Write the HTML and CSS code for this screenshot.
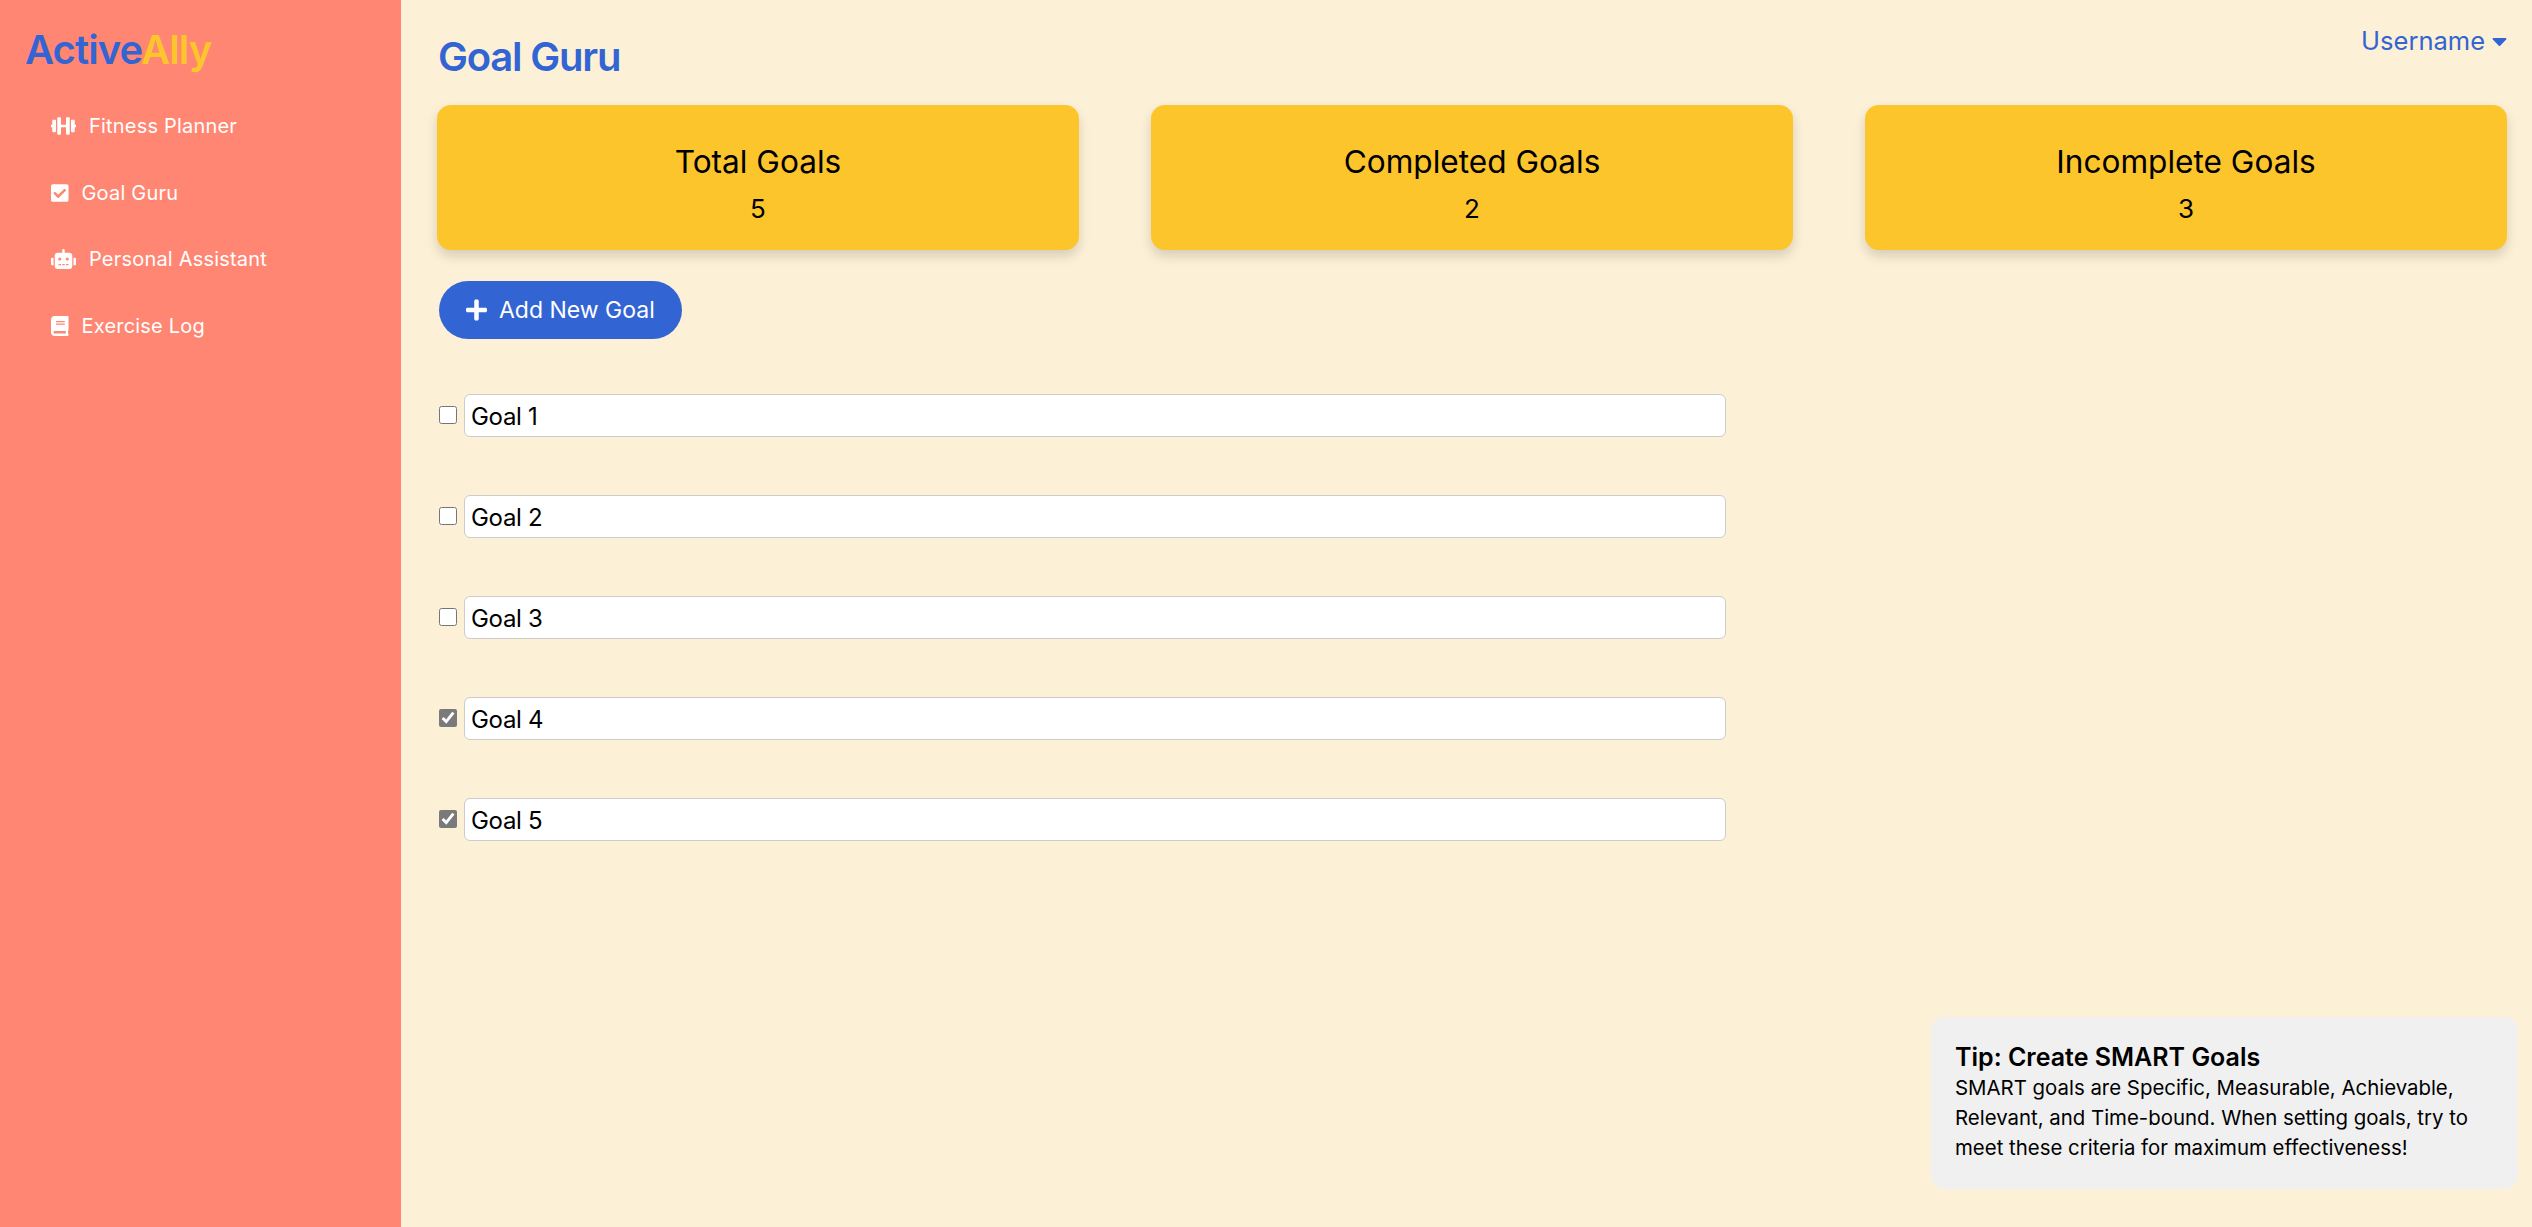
FILE: index.html
```html
<!DOCTYPE html>
<html lang="en">
<head>
    <meta charset="UTF-8">
    <meta name="viewport" content="width=device-width, initial-scale=1.0">
    <title>Goal Guru - ActiveAlly</title>
    <link rel="stylesheet" href="styles.css">
</head>
<body>
    <aside class="sidebar">
        <div class="logo">Active<span class="logo-ally">Ally</span></div>
        <ul class="side-nav">
            <li><a href="#"><svg class="nav-icon wide" viewBox="0 0 640 512"><path d="M104 96H56c-13.3 0-24 10.7-24 24v104H8c-4.4 0-8 3.6-8 8v48c0 4.4 3.6 8 8 8h24v104c0 13.3 10.7 24 24 24h48c13.3 0 24-10.7 24-24V120c0-13.3-10.7-24-24-24zm528 128h-24V120c0-13.3-10.7-24-24-24h-48c-13.3 0-24 10.7-24 24v272c0 13.3 10.7 24 24 24h48c13.3 0 24-10.7 24-24V288h24c4.4 0 8-3.6 8-8v-48c0-4.4-3.6-8-8-8zM456 32h-48c-13.3 0-24 10.7-24 24v168H256V56c0-13.3-10.7-24-24-24h-48c-13.3 0-24 10.7-24 24v400c0 13.3 10.7 24 24 24h48c13.3 0 24-10.7 24-24V288h128v168c0 13.3 10.7 24 24 24h48c13.3 0 24-10.7 24-24V56c0-13.3-10.7-24-24-24z"/></svg>Fitness Planner</a></li>
            <li><a href="#"><svg class="nav-icon" viewBox="0 0 448 512"><path d="M400 480H48c-26.51 0-48-21.49-48-48V80c0-26.51 21.49-48 48-48h352c26.51 0 48 21.49 48 48v352c0 26.51-21.49 48-48 48zm-204.686-98.059l184-184c6.248-6.248 6.248-16.379 0-22.627l-22.627-22.627c-6.248-6.248-16.379-6.249-22.628 0L184 302.745l-70.059-70.059c-6.248-6.248-16.379-6.248-22.628 0l-22.627 22.627c-6.248 6.248-6.248 16.379 0 22.627l104 104c6.249 6.25 16.379 6.25 22.628.001z"/></svg>Goal Guru</a></li>
            <li><a href="#"><svg class="nav-icon wide" viewBox="0 0 640 512"><path d="M32,224H64V416H32A31.96166,31.96166,0,0,1,0,384V256A31.96166,31.96166,0,0,1,32,224Zm512-48V448a64.06328,64.06328,0,0,1-64,64H160a64.06328,64.06328,0,0,1-64-64V176a79.974,79.974,0,0,1,80-80H288V32a32,32,0,0,1,64,0V96H464A79.974,79.974,0,0,1,544,176ZM264,256a40,40,0,1,0-40,40A39.997,39.997,0,0,0,264,256Zm-8,128H192v32h64Zm96,0H288v32h64ZM456,256a40,40,0,1,0-40,40A39.997,39.997,0,0,0,456,256Zm-8,128H384v32h64ZM640,256V384a31.96166,31.96166,0,0,1-32,32H576V224h32A31.96166,31.96166,0,0,1,640,256Z"/></svg>Personal Assistant</a></li>
            <li><a href="#"><svg class="nav-icon" viewBox="0 0 448 512"><path d="M448 360V24c0-13.3-10.7-24-24-24H96C43 0 0 43 0 96v320c0 53 43 96 96 96h328c13.3 0 24-10.7 24-24v-16c0-7.5-3.5-14.3-8.9-18.7-4.2-15.4-4.2-59.3 0-74.7 5.4-4.3 8.9-11.1 8.9-18.6zM128 134c0-3.3 2.7-6 6-6h212c3.3 0 6 2.7 6 6v20c0 3.3-2.7 6-6 6H134c-3.3 0-6-2.7-6-6v-20zm0 64c0-3.3 2.7-6 6-6h212c3.3 0 6 2.7 6 6v20c0 3.3-2.7 6-6 6H134c-3.3 0-6-2.7-6-6v-20zm253.4 250H96c-17.7 0-32-14.3-32-32 0-17.6 14.4-32 32-32h285.4c-1.9 17.1-1.9 46.9 0 64z"/></svg>Exercise Log</a></li>
        </ul>
    </aside>

    <main class="main">
        <header class="topbar">
            <h1>Goal Guru</h1>
            <a class="user-menu" href="#">Username<svg class="caret" viewBox="0 0 320 512"><path d="M31.3 192h257.3c17.8 0 26.7 21.5 14.1 34.1L174.1 354.8c-7.8 7.8-20.5 7.8-28.3 0L17.2 226.1C4.6 213.5 13.5 192 31.3 192z"/></svg></a>
        </header>

        <section class="stats">
            <div class="stat-card">
                <h3>Total Goals</h3>
                <p>5</p>
            </div>
            <div class="stat-card">
                <h3>Completed Goals</h3>
                <p>2</p>
            </div>
            <div class="stat-card">
                <h3>Incomplete Goals</h3>
                <p>3</p>
            </div>
        </section>

        <button class="add-btn"><svg class="plus" viewBox="0 0 448 512"><path d="M416 208H272V64c0-17.67-14.33-32-32-32h-32c-17.67 0-32 14.33-32 32v144H32c-17.67 0-32 14.33-32 32v32c0 17.67 14.33 32 32 32h144v144c0 17.67 14.33 32 32 32h32c17.67 0 32-14.33 32-32V304h144c17.67 0 32-14.33 32-32v-32c0-17.67-14.33-32-32-32z"/></svg>Add New Goal</button>

        <div class="goal-list">
            <div class="goal"><input type="checkbox"><input class="goal-text" type="text" value="Goal 1"></div>
            <div class="goal"><input type="checkbox"><input class="goal-text" type="text" value="Goal 2"></div>
            <div class="goal"><input type="checkbox"><input class="goal-text" type="text" value="Goal 3"></div>
            <div class="goal"><input type="checkbox" checked><input class="goal-text" type="text" value="Goal 4"></div>
            <div class="goal"><input type="checkbox" checked><input class="goal-text" type="text" value="Goal 5"></div>
        </div>

        <div class="tip">
            <h4>Tip: Create SMART Goals</h4>
            <p>SMART goals are Specific, Measurable, Achievable, Relevant, and Time-bound. When setting goals, try to meet these criteria for maximum effectiveness!</p>
        </div>
    </main>
</body>
</html>
```

FILE: styles.css
```css
/* ActiveAlly - Goal Guru */
* {
    box-sizing: border-box;
}
html, body {
    height: 100%;
}
body {
    margin: 0;
    display: flex;
    overflow: hidden;
    font-family: Inter, "Noto Sans", sans-serif;
    background-color: #fcf0d6;
    color: #000;
}
.sidebar {
    width: 401px;
    flex-shrink: 0;
    background-color: #ff8673;
    padding: 25px 25px;
}
.logo {
    font-size: 40px;
    line-height: 50px;
    font-weight: 600;
    letter-spacing: -0.9px;
    color: #3364d4;
}
.logo-ally {
    color: #fdc52c;
}
.side-nav {
    list-style-type: none;
    margin: 18px 0 0;
    padding: 0 0 0 26px;
}
.side-nav li {
    height: 66.5px;
    display: flex;
    align-items: center;
}
.side-nav a {
    display: flex;
    align-items: center;
    color: #fff;
    text-decoration: none;
    font-size: 20px;
    letter-spacing: 0.2px;
}
.nav-icon {
    width: 17.5px;
    height: 20px;
    margin-right: 13px;
    fill: #fff;
}
.nav-icon.wide {
    width: 25px;
}
.main {
    flex: 1;
    position: relative;
    padding: 0 25px 0 36px;
}
.topbar {
    display: flex;
    justify-content: space-between;
    align-items: flex-start;
    height: 105px;
    padding-left: 1px;
}
.topbar h1 {
    margin: 33px 0 0;
    font-size: 40px;
    line-height: 48px;
    font-weight: 600;
    letter-spacing: -1.2px;
    color: #3364d4;
}
.user-menu {
    display: flex;
    align-items: center;
    margin-top: 24px;
    font-size: 25.5px;
    line-height: 34px;
    color: #3364d4;
    text-decoration: none;
}
.caret {
    width: 15px;
    height: 24px;
    margin-left: 7px;
    fill: #3364d4;
}
.stats {
    display: grid;
    grid-template-columns: repeat(3, 1fr);
    gap: 72px;
}
.stat-card {
    height: 145px;
    padding-top: 37px;
    text-align: center;
    background-color: #fdc52c;
    border-radius: 14px;
    box-shadow: 0 6px 12px rgba(0, 0, 0, 0.15);
}
.stat-card h3 {
    margin: 0;
    font-size: 31.6px;
    line-height: 40px;
    font-weight: 400;
}
.stat-card p {
    margin: 10px 0 0;
    font-size: 26px;
    line-height: 34px;
}
.add-btn {
    display: flex;
    align-items: center;
    height: 58px;
    margin: 31px 0 0 2px;
    padding: 0 27px;
    border: none;
    border-radius: 29px;
    background-color: #3364d4;
    color: #fff;
    font-family: inherit;
    font-size: 23px;
}
.plus {
    width: 21px;
    height: 24px;
    margin-right: 12px;
    fill: #fff;
}
.goal-list {
    margin-top: 55px;
}
.goal {
    display: flex;
    align-items: center;
    height: 43px;
    margin-bottom: 58px;
    padding-left: 2px;
}
.goal input[type="checkbox"] {
    width: 18px;
    height: 18px;
    margin: 0 7px 2px 0;
    accent-color: #7a7a7a;
}
.goal-text {
    width: 1262px;
    height: 43px;
    padding: 1px 6px 0;
    border: 1px solid #ccc;
    border-radius: 6px;
    background-color: #fff;
    font-family: inherit;
    font-size: 24px;
    letter-spacing: -0.3px;
    color: #000;
}
.tip {
    position: absolute;
    right: 14px;
    bottom: 38px;
    width: 587px;
    height: 172px;
    padding: 24px 24px;
    background-color: #f0f0f0;
    border-radius: 14px;
}
.tip h4 {
    margin: 0;
    font-size: 25px;
    line-height: 32px;
    font-weight: 600;
}
.tip p {
    margin: 0;
    font-size: 20.4px;
    line-height: 30px;
}
```
